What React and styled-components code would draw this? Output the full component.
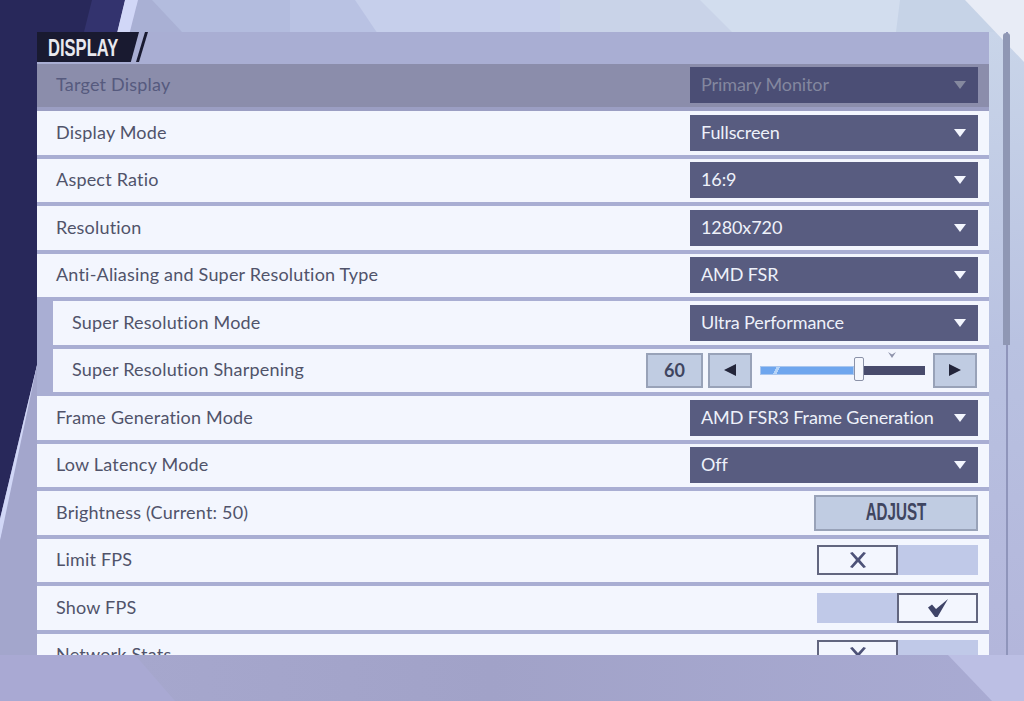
import React from "react";
import styled, { createGlobalStyle } from "styled-components";

const GlobalStyle = createGlobalStyle`
  html, body {
    margin: 0;
    padding: 0;
    overflow: hidden;
    background: #a8a9d0;
  }
`;

const Page = styled.div`
  position: relative;
  width: 1024px;
  height: 701px;
  overflow: hidden;
  box-sizing: border-box;
  padding: 32px 14px 46px 37px;
  display: flex;
  gap: 15px;
  font-family: "Lato", "Noto Sans", sans-serif;
`;

const Backdrop = styled.svg`
  position: absolute;
  left: 0;
  top: 0;
`;

const Panel = styled.main`
  position: relative;
  width: 952px;
  height: 623px;
  overflow: hidden;
  background: #a9aed3;
`;

const Header = styled.header`
  height: 31.5px;
  display: flex;
  align-items: stretch;
`;

const Tag = styled.h2`
  margin: 0;
  width: 102px;
  height: 30px;
  box-sizing: border-box;
  padding-left: 11px;
  background: #191a30;
  clip-path: polygon(0 0, 100% 0, 92% 100%, 0 100%);
  color: #e9e9ef;
  font-family: "Liberation Sans", sans-serif;
  font-size: 23px;
  font-weight: 700;
  line-height: 33px;
`;

/* no condensed face is installed, so the squeezed titles are scaled */
const Condensed = styled.span`
  display: inline-block;
  white-space: nowrap;
  transform: scaleX(${(p) => p.$x});
  transform-origin: ${(p) => p.$origin || "center"};
`;

const TagSlash = styled.span`
  width: 12px;
  height: 30px;
  margin-left: -3px;
  background: #191a30;
  clip-path: polygon(75% 0, 100% 0, 25% 100%, 0 100%);
`;

const Row = styled.div`
  height: 43.5px;
  margin: 0 0 4px ${(p) => (p.$sub ? "16px" : "0")};
  box-sizing: border-box;
  padding: 0 11px 0 19px;
  display: flex;
  align-items: center;
  justify-content: space-between;
  background: ${(p) => (p.$disabled ? "#8b8dab" : "#f3f6fe")};
  box-shadow: ${(p) => (p.$disabled ? "0 4px 0 #9b9ec3" : "none")};
`;

const Label = styled.span`
  font-size: 18px;
  color: ${(p) => (p.$disabled ? "#565a7e" : "#50536a")};
  letter-spacing: 0.2px;
  white-space: nowrap;
  position: relative;
  top: -1px;
`;

const Select = styled.div`
  width: 288px;
  height: 36px;
  box-sizing: border-box;
  padding: 0 12px 2px 11px;
  display: flex;
  align-items: center;
  justify-content: space-between;
  background: ${(p) => (p.$disabled ? "#4b4e75" : "#585c80")};
  color: ${(p) => (p.$disabled ? "#83879f" : "#eef1fa")};
  font-size: 18px;
  letter-spacing: -0.1px;
  white-space: nowrap;
`;

const Caret = styled.i`
  width: 0;
  height: 0;
  margin-top: 2px;
  border-left: 6.5px solid transparent;
  border-right: 6.5px solid transparent;
  border-top: 8px solid ${(p) => (p.$disabled ? "#85899f" : "#f3f6fe")};
`;

const SliderWrap = styled.div`
  display: flex;
  align-items: center;
  margin-right: 1px;
`;

const Boxed = styled.div`
  height: 35px;
  box-sizing: border-box;
  display: flex;
  align-items: center;
  justify-content: center;
  background: #c0cce2;
  border: 2px solid #98a2b8;
  color: #3f4560;
`;

const ValueBox = styled(Boxed)`
  width: 57px;
  margin-right: 5px;
  font-size: 18px;
  font-weight: 700;
`;

const StepButton = styled(Boxed)`
  width: 44px;
`;

const Track = styled.div`
  position: relative;
  width: 165px;
  height: 9px;
  margin: 0 8px;
  background: #484b6c;
`;

const TrackFill = styled.div`
  height: 100%;
  box-sizing: border-box;
  background: linear-gradient(115deg, #6ea6ee 16%, #b6d4f7 16% 20%, #6ea6ee 20%);
  border: 1px solid #a9c6ee;
`;

const Thumb = styled.div`
  position: absolute;
  top: -9px;
  width: 10px;
  height: 24px;
  box-sizing: border-box;
  background: #f5f7fd;
  border: 1px solid #8b92a8;
  border-radius: 2px;
`;

const DefaultMark = styled.svg`
  position: absolute;
  top: -14px;
  left: 128px;
`;

const AdjustButton = styled(Boxed)`
  width: 164px;
  height: 36px;
  font-family: "Liberation Sans", sans-serif;
  font-size: 23px;
  font-weight: 700;
`;

const Toggle = styled.div`
  width: 161px;
  height: 30px;
  display: flex;
  justify-content: ${(p) => (p.$on ? "flex-end" : "flex-start")};
  background: #c0c9e8;
`;

const Knob = styled.div`
  width: 81px;
  height: 30px;
  box-sizing: border-box;
  display: flex;
  align-items: center;
  justify-content: center;
  background: #f3f6fe;
  border: 2px solid #62667f;
`;

const ScrollTrack = styled.aside`
  position: relative;
  width: 2px;
  margin-left: 2px;
  height: 623px;
  background: #8f95bb;
`;

const ScrollThumb = styled.div`
  position: absolute;
  left: -3px;
  top: 1px;
  width: 7px;
  height: 312px;
  background: #8f97b4;
  border-radius: 3px 3px 0 0;
`;

const rows = [
  { label: "Target Display", type: "select", value: "Primary Monitor", disabled: true },
  { label: "Display Mode", type: "select", value: "Fullscreen" },
  { label: "Aspect Ratio", type: "select", value: "16:9" },
  { label: "Resolution", type: "select", value: "1280x720" },
  { label: "Anti-Aliasing and Super Resolution Type", type: "select", value: "AMD FSR" },
  { label: "Super Resolution Mode", type: "select", value: "Ultra Performance", sub: true },
  { label: "Super Resolution Sharpening", type: "slider", value: 60, sub: true },
  { label: "Frame Generation Mode", type: "select", value: "AMD FSR3 Frame Generation" },
  { label: "Low Latency Mode", type: "select", value: "Off" },
  { label: "Brightness (Current: 50)", type: "button", value: "ADJUST" },
  { label: "Limit FPS", type: "toggle", value: false },
  { label: "Show FPS", type: "toggle", value: true },
  { label: "Network Stats", type: "toggle", value: false },
];

const CrossIcon = () => (
  <svg width="18" height="18" viewBox="0 0 18 18">
    <path d="M1 2 L3.5 1 L9 7 L14.5 1 L17 2 L11 9 L17 16 L14.5 17 L9 11 L3.5 17 L1 16 L7 9 Z" fill="#4d5278" />
  </svg>
);

const CheckIcon = () => (
  <svg width="22" height="20" viewBox="0 0 22 20">
    <path d="M1 9.5 L5 6.5 L9 11 L21 1 L10.5 19 L8 19 Z" fill="#3f4468" />
  </svg>
);

const ArrowLeft = () => (
  <svg width="14" height="14" viewBox="0 0 14 14">
    <path d="M1 7 L13 1 L13 13 Z" fill="#23253a" />
  </svg>
);

const ArrowRight = () => (
  <svg width="14" height="14" viewBox="0 0 14 14">
    <path d="M13 7 L1 1 L1 13 Z" fill="#23253a" />
  </svg>
);

const Slider = ({ value }) => (
  <SliderWrap>
    <ValueBox>{value}</ValueBox>
    <StepButton>
      <ArrowLeft />
    </StepButton>
    <Track>
      <TrackFill style={{ width: `${value * 0.95}%` }} />
      <Thumb style={{ left: `${value * 0.95}%` }} />
      <DefaultMark width="8" height="6" viewBox="0 0 8 6">
        <path d="M0 0 L4 2.5 L8 0 L4 6 Z" fill="#8d92aa" />
      </DefaultMark>
    </Track>
    <StepButton>
      <ArrowRight />
    </StepButton>
  </SliderWrap>
);

const Control = ({ row }) => {
  if (row.type === "select") {
    return (
      <Select $disabled={row.disabled}>
        {row.value}
        <Caret $disabled={row.disabled} />
      </Select>
    );
  }
  if (row.type === "slider") return <Slider value={row.value} />;
  if (row.type === "button") {
    return (
      <AdjustButton>
        <Condensed $x={0.66}>{row.value}</Condensed>
      </AdjustButton>
    );
  }
  return (
    <Toggle $on={row.value}>
      <Knob>{row.value ? <CheckIcon /> : <CrossIcon />}</Knob>
    </Toggle>
  );
};

const App = () => (
  <>
    <GlobalStyle />
    <Page>
      <Backdrop width="1024" height="701" viewBox="0 0 1024 701">
        <defs>
          <linearGradient id="rightSide" x1="0" y1="0" x2="0" y2="1">
            <stop offset="0" stopColor="#c9d5e9" />
            <stop offset="0.5" stopColor="#b9c2e1" />
            <stop offset="1" stopColor="#b3b6db" />
          </linearGradient>
          <linearGradient id="floor" x1="0" y1="0" x2="1" y2="0">
            <stop offset="0" stopColor="#a6a7cd" />
            <stop offset="0.4" stopColor="#a1a2c8" />
            <stop offset="1" stopColor="#a9abd3" />
          </linearGradient>
        </defs>
        <rect width="1024" height="701" fill="#a9a9d3" />
        {/* top band */}
        <polygon points="138,0 1024,0 1024,40 138,40" fill="#b3bcde" />
        <polygon points="138,0 152,0 182,32 130,32" fill="#a9b0d4" />
        <polygon points="290,0 1024,0 1024,40 290,40" fill="#b9c2e3" />
        <polygon points="355,0 1024,0 1024,40 382,40" fill="#c6cfeb" />
        <polygon points="560,0 1024,0 1024,40 560,40" fill="#c9d3e8" />
        <polygon points="700,0 1024,0 1024,40 740,40" fill="#d2ddee" />
        <polygon points="900,0 1024,0 1024,40 895,40" fill="#c6d3e7" />
        {/* right side */}
        <rect x="989" y="32" width="35" height="623" fill="url(#rightSide)" />
        <polygon points="965,0 1024,0 1024,62" fill="#e8ecf6" />
        {/* left side */}
        <polygon points="0,0 125,0 0,519" fill="#28285a" />
        <polygon points="92,0 125,0 117,32 84,32" fill="#33336e" />
        <polygon points="125,0 138,0 0,541 0,519" fill="#d1d7f7" />
        <polygon points="37,365 37,655 0,655 0,541" fill="#a3a6cc" />
        {/* bottom */}
        <polygon points="135,655 1024,655 1024,701 175,701" fill="url(#floor)" />
        <polygon points="948,655 1024,655 1024,701 992,701" fill="#bcbfe4" />
      </Backdrop>
      <Panel>
        <Header>
          <Tag>
            <Condensed $x={0.72} $origin="left">DISPLAY</Condensed>
          </Tag>
          <TagSlash />
        </Header>
        {rows.map((row) => (
          <Row key={row.label} $sub={row.sub} $disabled={row.disabled}>
            <Label $disabled={row.disabled}>{row.label}</Label>
            <Control row={row} />
          </Row>
        ))}
      </Panel>
      <ScrollTrack>
        <ScrollThumb />
      </ScrollTrack>
    </Page>
  </>
);

export default App;
